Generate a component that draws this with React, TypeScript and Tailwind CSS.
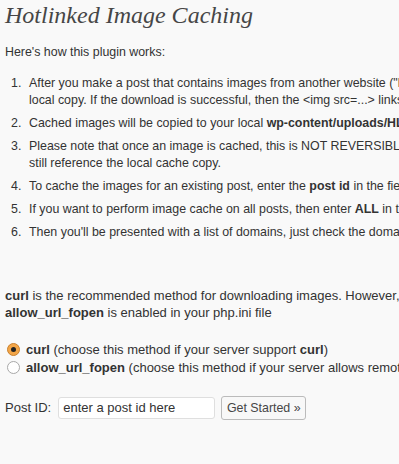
import React from "react";

const items: React.ReactNode[] = [
  <>
    After you make a post that contains images from another website ("hotlinked images"), this plugin will attempt to download a
    <br />
    local copy. If the download is successful, then the &lt;img src=...&gt; links in your post will be updated to point to the local copy.
  </>,
  <>
    Cached images will be copied to your local <b>wp-content/uploads/HLIC</b> folder.
  </>,
  <>
    Please note that once an image is cached, this is NOT REVERSIBLE. Even if you deactivate this plugin, your posts will
    <br />
    still reference the local cache copy.
  </>,
  <>
    To cache the images for an existing post, enter the <b>post id</b> in the field below.
  </>,
  <>
    If you want to perform image cache on all posts, then enter <b>ALL</b> in the field below.
  </>,
  <>Then you'll be presented with a list of domains, just check the domains you want to cache.</>,
];

function Radio({ checked }: { checked?: boolean }) {
  return checked ? (
    <span className="w-[13px] h-[13px] rounded-full border border-[#c9812f] bg-[#f3a648] flex items-center justify-center shrink-0">
      <span className="w-[5px] h-[5px] rounded-full bg-[#222]" />
    </span>
  ) : (
    <span className="w-[13px] h-[13px] rounded-full border border-[#a8a8a8] bg-white shrink-0" />
  );
}

export default function App() {
  return (
    <div className="w-[399px] h-[464px] overflow-hidden bg-[#f9f9f9]">
      <div className="w-[1000px] pl-[5px] text-[13px] text-[#333] font-['Liberation_Sans',Arial,sans-serif] whitespace-nowrap">
        <h2 className="font-['Liberation_Serif',Georgia,serif] italic text-[24px] leading-[29px] text-[#464646] pt-[1px]">
          Hotlinked Image Caching
        </h2>

        <p className="mt-[14px] leading-[17px] text-[12.4px]">Here's how this plugin works:</p>

        <ol className="mt-[14px] pl-[6px] text-[12.4px]">
          {items.map((t, i) => (
            <li key={i} className="flex mb-[6px] leading-[17px]">
              <span className="w-[18px] shrink-0">{i + 1}.</span>
              <span>{t}</span>
            </li>
          ))}
        </ol>

        <p className="mt-[46px] leading-[17px]">
          <b>curl</b> is the recommended method for downloading images. However, if your server does not support curl, you can use
          <br />
          <b>allow_url_fopen</b> is enabled in your php.ini file
        </p>

        <div className="mt-[22px] flex flex-col gap-[5px]">
          <label className="flex items-center gap-[6px] pl-[2px] leading-[13px]">
            <Radio checked />
            <span>
              <b>curl</b> (choose this method if your server support <b>curl</b>)
            </span>
          </label>
          <label className="flex items-center gap-[6px] pl-[2px] leading-[13px]">
            <Radio />
            <span>
              <b>allow_url_fopen</b> (choose this method if your server allows remote file access)
            </span>
          </label>
        </div>

        <div className="mt-[22px] flex items-center">
          <span>Post ID:</span>
          <div className="ml-[7px] w-[157px] h-[22px] bg-white border border-[#dfdfdf] rounded-[3px] px-[4px] flex items-center">
            enter a post id here
          </div>
          <button className="ml-[6px] w-[85px] h-[24px] bg-[#f8f8f8] border border-[#bbb] rounded-[3px] text-[#464646] text-[12.4px]">
            Get Started »
          </button>
        </div>
      </div>
    </div>
  );
}
